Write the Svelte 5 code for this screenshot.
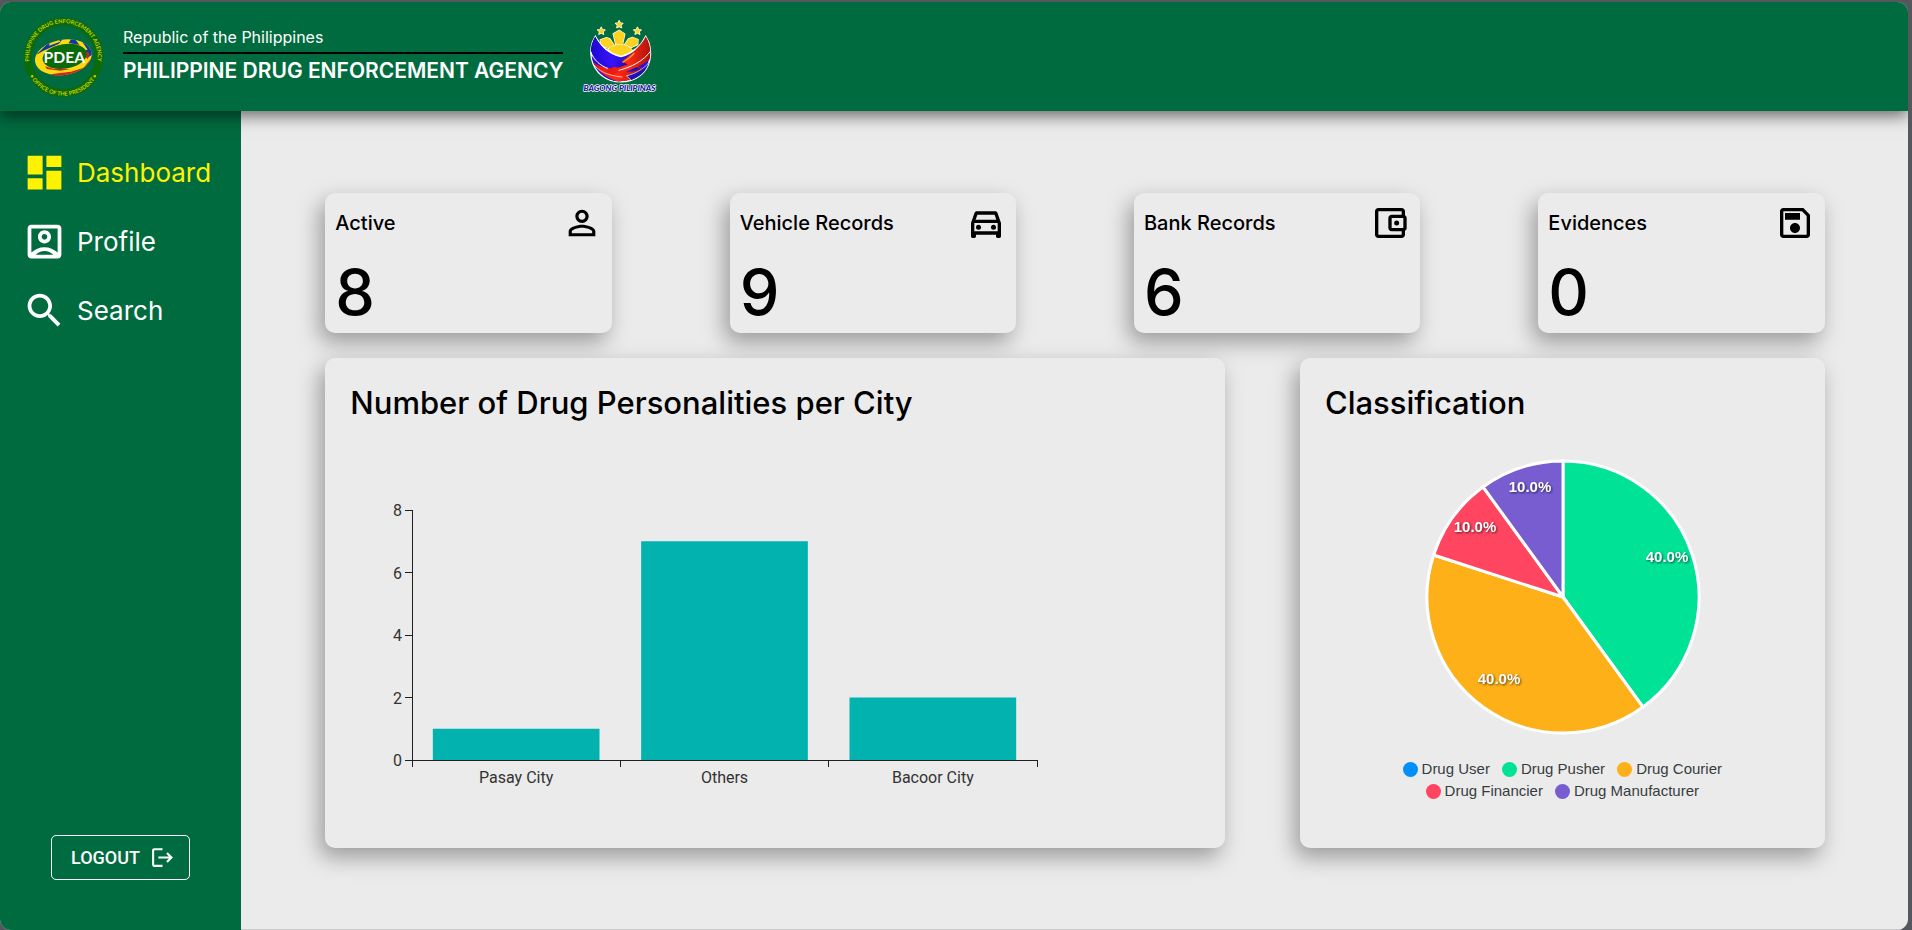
<script>
  const nav = [
    { label: 'Dashboard', active: true, path: 'M3 13h8V3H3v10zm0 8h8v-6H3v6zm10 0h8V11h-8v10zm0-18v6h8V3h-8z' },
    { label: 'Profile', active: false, path: '' },
    { label: 'Search', active: false, path: 'M15.5 14h-.79l-.28-.27C15.41 12.59 16 11.11 16 9.5 16 5.910 13.090 3 9.500 3S3 5.910 3 9.500 5.910 16 9.500 16c1.610 0 3.090-.59 4.230-1.570l.27.28v.79l5 4.990L20.490 19l-4.990-5zm-6 0C7.010 14 5 11.990 5 9.500S7.010 5 9.500 5 14 7.010 14 9.500 11.990 14 9.500 14z' }
  ];

  const stats = [
    { label: 'Active', value: 8, icon: 'person' },
    { label: 'Vehicle Records', value: 9, icon: 'car' },
    { label: 'Bank Records', value: 6, icon: 'wallet' },
    { label: 'Evidences', value: 0, icon: 'save' }
  ];

  const cities = [
    { name: 'Pasay City', count: 1 },
    { name: 'Others', count: 7 },
    { name: 'Bacoor City', count: 2 }
  ];
  const plot = { left: 62, top: 87, width: 625, height: 250, max: 8 };
  const band = plot.width / cities.length;
  const baseY = plot.top + plot.height;
  const yOf = (v) => baseY - (v / plot.max) * plot.height;

  const classes = [
    { name: 'Drug User', share: 0, color: '#008ffb' },
    { name: 'Drug Pusher', share: 40, color: '#00e396', lx: 244, ly: 100 },
    { name: 'Drug Courier', share: 40, color: '#feb019', lx: 76, ly: 222 },
    { name: 'Drug Financier', share: 10, color: '#ff4560', lx: 52, ly: 70 },
    { name: 'Drug Manufacturer', share: 10, color: '#775dd0', lx: 107, ly: 30 }
  ];
  const R = 136;
  const C = 140;
  const at = (p) => {
    const a = (p / 100) * Math.PI * 2;
    return `${C + R * Math.sin(a)} ${C - R * Math.cos(a)}`;
  };
  let acc = 0;
  const slices = classes
    .filter((c) => c.share > 0)
    .map((c) => {
      const from = acc;
      acc += c.share;
      return { ...c, d: `M${C} ${C}L${at(from)}A${R} ${R} 0 0 1 ${at(acc)}Z` };
    });
</script>

<div class="page">
  <header>
    <svg class="seal" viewBox="65 47 246 246" role="img" aria-label="PDEA seal">
      <defs>
        <path id="ring-top" d="M92 206A103 103 0 1 1 286 206" />
        <path id="ring-bottom" d="M74 171A115 115 0 0 0 304 171" />
        <clipPath id="oval"><ellipse cx="189" cy="171" rx="86" ry="53" transform="rotate(-9 189 171)" /></clipPath>
      </defs>
      <circle cx="189" cy="171" r="107" fill="none" stroke="#0b6a09" stroke-width="24" />
      <g clip-path="url(#oval)">
        <rect x="95" y="100" width="190" height="140" fill="#ffd910" />
        <path d="M106 165L150 122 190 112 176 130 128 152zM205 128L215 112 262 120 280 160 262 172 240 134z" fill="#0b3aa8" />
        <path d="M222 114L240 116 262 148 250 150zM258 122L274 142 272 150z" fill="#ffd910" />
        <path d="M148 128L176 118 180 124 146 136z" fill="#ffd910" />
        <path d="M150 222L212 214 250 202 278 168 272 190 240 222 160 232zM134 198L160 206 210 206 180 211 140 206z" fill="#d51f22" />
        <path d="M244 140L268 160 262 176 248 164z" fill="#d51f22" />
      </g>
      <ellipse cx="193" cy="168" rx="67" ry="37" transform="rotate(-9 193 168)" fill="#0b6a09" />
      <text class="seal-name" x="192" y="187" text-anchor="middle">PDEA</text>
      <text class="seal-ring"><textPath href="#ring-top" startOffset="50%" text-anchor="middle">PHILIPPINE DRUG ENFORCEMENT AGENCY</textPath></text>
      <text class="seal-ring"><textPath href="#ring-bottom" startOffset="50%" text-anchor="middle">• OFFICE OF THE PRESIDENT •</textPath></text>
    </svg>
    <div class="agency">
      <p>Republic of the Philippines</p>
      <h1>PHILIPPINE DRUG ENFORCEMENT AGENCY</h1>
    </div>
    <svg class="bagong" viewBox="725 60 235 220" role="img" aria-label="Bagong Pilipinas">
      <defs>
        <clipPath id="bowl"><path d="M768 110C756 130 752 152 757 176C766 218 800 246 845 246C890 246 924 218 932 180C937 154 933 130 920 110C905 142 880 160 845 170C808 160 784 142 768 110Z" /></clipPath>
        <linearGradient id="red" x1="0" x2="1" y1="0" y2="0"><stop offset="0" stop-color="#e8130a" /><stop offset=".45" stop-color="#ff2a12" /><stop offset="1" stop-color="#9c0d0d" /></linearGradient>
        <linearGradient id="blue" x1="0" x2="1" y1="0" y2="0"><stop offset="0" stop-color="#1a08c8" /><stop offset=".6" stop-color="#3a12ff" /><stop offset="1" stop-color="#1a0fa0" /></linearGradient>
      </defs>
      <g fill="#ffd21f" stroke="#fff" stroke-width="4" stroke-linejoin="round" paint-order="stroke">
        <path d="M840 62l3 7 8 1-6 5 2 8-7-4-7 4 2-8-6-5 8-1z" />
        <path d="M786 82l3 7 8 1-6 5 2 8-7-4-7 4 2-8-6-5 8-1z" />
        <path d="M895 82l3 7 8 1-6 5 2 8-7-4-7 4 2-8-6-5 8-1z" />
        <path d="M832 144L822 102 840 91 857 102 848 144z" />
        <path d="M820 150L785 137 783 120 802 113 812 117 832 146z" />
        <path d="M860 150L896 134 897 119 880 112 868 117 848 146z" />
        <path d="M800 165C804 145 822 134 842 134C862 134 878 144 884 160L845 190z" />
      </g>
      <path d="M768 110C756 130 752 152 757 176C766 218 800 246 845 246C890 246 924 218 932 180C937 154 933 130 920 110C905 142 880 160 845 170C808 160 784 142 768 110Z" fill="#2b12d8" stroke="#fff" stroke-width="5" />
      <g clip-path="url(#bowl)">
        <path d="M756 168C776 204 820 216 868 206L900 222 838 248C796 240 764 214 756 168z" fill="#2a10e0" />
        <path d="M760 186C790 212 850 212 890 196L925 212 880 240 838 246C804 236 776 216 760 186z" fill="url(#red)" />
        <path d="M862 228C890 222 914 208 938 180L925 225 880 245z" fill="#1f12b4" stroke="#fff" stroke-width="2" />
        <path d="M750 100L768 110C785 148 830 180 905 208L880 216C830 214 780 196 752 150z" fill="url(#blue)" />
        <path d="M800 214C840 194 890 160 920 108L950 100 938 172C920 196 860 218 818 224z" fill="url(#red)" />
        <path d="M750 96L768 110C784 146 820 172 866 194L836 204C800 196 770 176 752 146z" fill="url(#blue)" />
        <path d="M936 152C914 184 876 202 838 212" fill="none" stroke="#fff" stroke-width="3" />
        <path d="M754 156C764 182 784 198 806 206" fill="none" stroke="#fff" stroke-width="3" />
        <path d="M758 188C776 214 806 228 850 232" fill="none" stroke="#fff" stroke-width="2" />
        <path d="M850 188C864 180 876 170 886 160" fill="none" stroke="#ff9a1f" stroke-width="4" />
      </g>
      <text class="bagong-name" x="841" y="273" text-anchor="middle">BAGONG PILIPINAS</text>
    </svg>
  </header>

  <div class="body">
    <aside>
      <nav aria-label="Main">
        {#each nav as item}
          <a href="#{item.label.toLowerCase()}" class:active={item.active}>
            <svg viewBox="0 0 24 24" aria-hidden="true">
              {#if item.label === 'Profile'}
                <path fill-rule="evenodd" d="M19 3H5c-1.110 0-2 .9-2 2v14c0 1.100.89 2 2 2h14c1.100 0 2-.9 2-2V5c0-1.100-.9-2-2-2zM7.200 19C8.600 17.700 10.200 17 12 17s3.400.7 4.800 2H7.200zM19 17.860C17.200 16.100 14.700 15 12 15s-5.200 1.100-7 2.860V5h14z" />
                <path fill-rule="evenodd" d="M12 13c1.930 0 3.500-1.570 3.500-3.500S13.930 6 12 6 8.500 7.570 8.500 9.500s1.570 3.500 3.500 3.500zm0-5c.83 0 1.500.67 1.500 1.500s-.67 1.500-1.500 1.500-1.500-.67-1.500-1.500.67-1.500 1.500-1.500z" />
              {:else}
                <path d={item.path} />
              {/if}
            </svg>
            <span>{item.label}</span>
          </a>
        {/each}
      </nav>
      <button type="button" class="logout">
        LOGOUT
        <svg viewBox="0 0 24 24" aria-hidden="true"><path d="m17 7-1.410 1.410L18.170 11H8v2h10.170l-2.580 2.580L17 17l5-5zM4 5h8V3H4c-1.100 0-2 .9-2 2v14c0 1.100.9 2 2 2h8v-2H4V5z" /></svg>
      </button>
    </aside>

    <main>
      <div class="content">
        <section class="stats" aria-label="Totals">
          {#each stats as s}
            <article class="card stat">
              <div class="stat-head">
                <h2>{s.label}</h2>
                <svg viewBox="0 0 24 24" aria-hidden="true">
                  {#if s.icon === 'person'}
                    <path d="M12 5.900c1.160 0 2.100.94 2.100 2.100s-.94 2.100-2.100 2.100S9.900 9.160 9.900 8s.94-2.100 2.100-2.100m0 9c2.970 0 6.100 1.460 6.100 2.100v1.100H5.900V17c0-.64 3.130-2.100 6.100-2.100M12 4C9.790 4 8 5.790 8 8s1.790 4 4 4 4-1.790 4-4-1.790-4-4-4zm0 9c-2.670 0-8 1.340-8 4v3h16v-3c0-2.660-5.330-4-8-4z" />
                  {:else if s.icon === 'car'}
                    <path d="M18.920 6.010C18.720 5.420 18.160 5 17.500 5h-11c-.66 0-1.210.42-1.420 1.010L3 12v8c0 .55.45 1 1 1h1c.55 0 1-.45 1-1v-1h12v1c0 .55.45 1 1 1h1c.55 0 1-.45 1-1v-8l-2.080-5.990zM6.850 7h10.290l1.080 3.110H5.770L6.850 7zM19 17H5v-5h14v5z" />
                    <circle cx="7.500" cy="14.500" r="1.500" /><circle cx="16.500" cy="14.500" r="1.500" />
                  {:else if s.icon === 'wallet'}
                    <path d="M21 7.280V5c0-1.100-.9-2-2-2H5c-1.110 0-2 .9-2 2v14c0 1.100.89 2 2 2h14c1.100 0 2-.9 2-2v-2.280c.59-.35 1-.98 1-1.720V9c0-.74-.41-1.370-1-1.720zM20 9v6h-7V9h7zM5 19V5h14v2h-6c-1.100 0-2 .9-2 2v6c0 1.100.9 2 2 2h6v2H5z" />
                    <circle cx="16" cy="12" r="1.500" />
                  {:else}
                    <path d="M17 3H5c-1.110 0-2 .9-2 2v14c0 1.100.89 2 2 2h14c1.100 0 2-.9 2-2V7l-4-4zm2 16H5V5h11.170L19 7.830V19zm-7-7c-1.660 0-3 1.340-3 3s1.340 3 3 3 3-1.340 3-3-1.340-3-3-3zM6 6h9v4H6z" />
                  {/if}
                </svg>
              </div>
              <p>{s.value}</p>
            </article>
          {/each}
        </section>

        <section class="panels">
          <article class="card panel">
            <h2>Number of Drug Personalities per City</h2>
            <svg class="bars" viewBox="0 0 750 400" role="img" aria-label="Number of drug personalities per city">
              {#each cities as c, i}
                <rect x={plot.left + band * i + band * 0.1} y={yOf(c.count)} width={band * 0.8} height={baseY - yOf(c.count)} fill="#02b2af" />
                <text x={plot.left + band * (i + 0.5)} y={baseY + 23} text-anchor="middle">{c.name}</text>
              {/each}
              {#each [0, 2, 4, 6, 8] as v}
                <line x1={plot.left - 7} x2={plot.left} y1={yOf(v)} y2={yOf(v)} />
                <text x={plot.left - 10} y={yOf(v) + 6} text-anchor="end">{v}</text>
              {/each}
              <line x1={plot.left} x2={plot.left} y1={plot.top} y2={baseY} />
              <line x1={plot.left} x2={plot.left + plot.width} y1={baseY} y2={baseY} />
              {#each [0, 1, 2, 3] as t}
                <line x1={plot.left + band * t} x2={plot.left + band * t} y1={baseY} y2={baseY + 7} />
              {/each}
            </svg>
          </article>

          <article class="card panel">
            <h2>Classification</h2>
            <svg class="pie" viewBox="-1 -1 280 280" role="img" aria-label="Classification shares">
              {#each slices as s}
                <path d={s.d} fill={s.color} />
              {/each}
              {#each slices as s}
                <text x={s.lx} y={s.ly + 5} text-anchor="middle">{s.share.toFixed(1)}%</text>
              {/each}
            </svg>
            <ul class="legend">
              {#each classes as c}
                <li><i style="background:{c.color}"></i>{c.name}</li>
              {/each}
            </ul>
          </article>
        </section>
      </div>
    </main>
  </div>
</div>

<style>
  :global(body) {
    margin: 0;
    background: #55575e;
  }
  .page {
    --green: #006b3e;
    --display: Inter, 'Noto Sans', sans-serif;
    display: flex;
    flex-direction: column;
    box-sizing: border-box;
    min-height: calc(100vh - 2px);
    margin: 2px 4px 0 0;
    border-radius: 11px;
    overflow: hidden;
    background: #ebebeb;
    color: #000;
    font-family: var(--display);
  }
  h1, h2, p, ul {
    margin: 0;
    padding: 0;
  }
  header {
    position: relative;
    z-index: 1;
    display: flex;
    align-items: center;
    min-height: 109px;
    padding-left: 22px;
    background: var(--green);
    color: #fff;
    box-shadow: 0 5px 15px rgba(0, 0, 0, 0.55);
  }
  .seal {
    width: 82px;
    height: 82px;
  }
  .seal-name {
    font: 700 47px Lato, sans-serif;
    fill: #fff;
  }
  .seal-ring {
    font: 700 17px Lato, sans-serif;
    fill: #c9cf00;
  }
  .agency {
    margin: 0 18px 0 19px;
  }
  .agency p {
    padding-bottom: 4px;
    border-bottom: 2px solid #000;
    font-size: 16px;
    line-height: 22px;
  }
  .agency h1 {
    font-size: 21px;
    font-weight: 600;
    line-height: 34px;
  }
  .bagong {
    width: 78px;
    height: 73px;
  }
  .bagong-name {
    font: italic 900 25px Lato, sans-serif;
    fill: #14149c;
    stroke: #fff;
    stroke-width: 4px;
    stroke-linejoin: round;
    paint-order: stroke;
  }
  .body {
    display: flex;
    flex: 1;
  }
  aside {
    display: flex;
    flex-direction: column;
    align-items: center;
    justify-content: space-between;
    box-sizing: border-box;
    width: 241px;
    padding: 27px 0 50px;
    background: var(--green);
  }
  nav {
    align-self: stretch;
  }
  nav a {
    display: flex;
    align-items: center;
    gap: 10px;
    height: 69px;
    padding-left: 22px;
    color: #fff;
    font-size: 26px;
    text-decoration: none;
  }
  nav a.active {
    color: #fff200;
  }
  nav svg {
    width: 45px;
    height: 45px;
  }
  nav svg, .logout svg {
    fill: currentColor;
  }
  .logout {
    display: flex;
    align-items: center;
    gap: 10px;
    height: 45px;
    padding: 0 14px 0 19px;
    border: 1px solid #fff;
    border-radius: 5px;
    background: transparent;
    color: #fff;
    font: 500 18px Roboto, sans-serif;
  }
  .logout svg {
    width: 25px;
    height: 25px;
  }
  main {
    flex: 1;
    min-width: 0;
    padding: 82px 0 80px 1px;
    border-bottom: 1px solid #c8c8c8;
    box-sizing: border-box;
  }
  .content {
    display: grid;
    gap: 25px;
    width: 90%;
    margin: 0 auto;
  }
  .stats {
    display: grid;
    grid-template-columns: repeat(4, 1fr);
    gap: 118px;
  }
  .card {
    box-sizing: border-box;
    border-radius: 10px;
    background: #ebebeb;
    box-shadow: -5px 9px 22px rgba(0, 0, 0, 0.35);
  }
  .stat {
    min-height: 140px;
    padding: 10px;
  }
  .stat-head {
    display: flex;
    align-items: center;
    justify-content: space-between;
  }
  .stat-head h2 {
    font-size: 20px;
    font-weight: 500;
    white-space: nowrap;
  }
  .stat-head svg {
    width: 40px;
    height: 40px;
  }
  .stat p {
    margin-top: 19px;
    font-size: 63px;
    font-weight: 500;
    line-height: 60px;
  }
  .panels {
    display: grid;
    grid-template-columns: 60fr 35fr;
    gap: 5%;
  }
  .panel {
    display: flex;
    flex-direction: column;
    min-width: 0;
    min-height: 490px;
    padding: 25px;
  }
  .panel h2 {
    font-size: 31px;
    font-weight: 500;
    line-height: 40px;
  }
  .bars {
    width: 750px;
    max-width: 100%;
    height: auto;
  }
  .bars text {
    font: 16px Roboto, sans-serif;
    fill: #333;
  }
  .bars line {
    stroke: #1f1f1f;
    shape-rendering: crispEdges;
  }
  .pie {
    align-self: center;
    width: 280px;
    height: 280px;
    margin-top: 33px;
  }
  .pie path {
    stroke: #fff;
    stroke-width: 3px;
  }
  .pie text {
    font: 700 15px 'Liberation Sans', Arial, sans-serif;
    fill: #fff;
    filter: drop-shadow(1px 1px 1px rgba(0, 0, 0, 0.6));
  }
  .legend {
    display: flex;
    flex-wrap: wrap;
    align-self: center;
    justify-content: center;
    column-gap: 12px;
    max-width: 340px;
    margin-top: 22px;
    list-style: none;
    color: #373d3f;
    font: 15px/22px 'Liberation Sans', Arial, sans-serif;
  }
  .legend li {
    display: flex;
    align-items: center;
    gap: 4px;
  }
  .legend i {
    width: 15px;
    height: 15px;
    border-radius: 50%;
  }
</style>
